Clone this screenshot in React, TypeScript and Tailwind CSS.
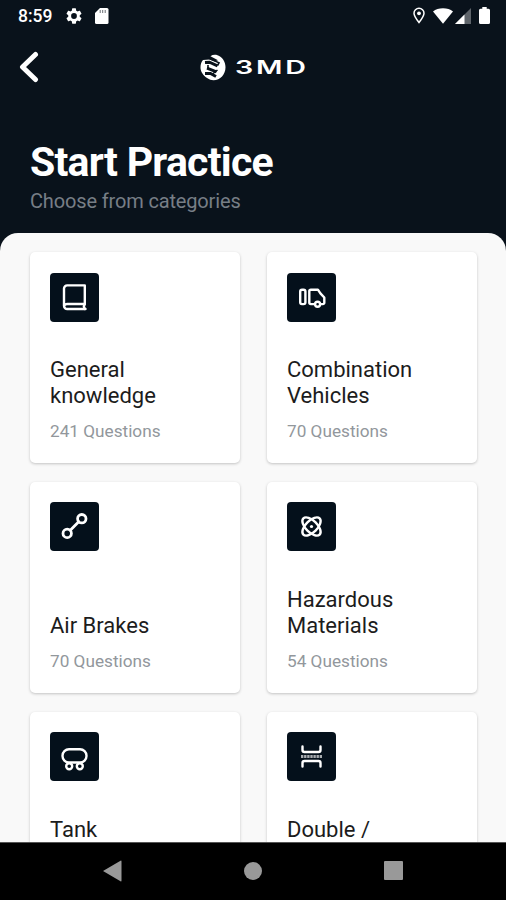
import type { ReactNode } from "react";

interface Category {
  title: string;
  questions?: number;
  icon: ReactNode;
}

interface IconProps {
  children: ReactNode;
}

function Icon({ children }: IconProps) {
  return (
    <svg
      width="49"
      height="49"
      viewBox="0 0 49 49"
      fill="none"
      stroke="currentColor"
      strokeWidth="2.4"
      strokeLinecap="round"
      strokeLinejoin="round"
    >
      {children}
    </svg>
  );
}

const categories: Category[] = [
  {
    title: "General\nknowledge",
    questions: 241,
    icon: (
      <Icon>
        <path d="M34.8 31V12.4H17.2a3.2 3.2 0 0 0-3.2 3.2v17.2a3.2 3.2 0 0 0 3.2 3.2h18.3" />
        <path d="M14.3 32.6c.4-1 1.4-1.6 2.8-1.6h17.7L33.8 33.5l1 2.5" />
      </Icon>
    ),
  },
  {
    title: "Combination\nVehicles",
    questions: 70,
    icon: (
      <Icon>
        <rect x="13.2" y="16.7" width="5.2" height="14.4" rx="1.8" />
        <path d="M27.6 31.1h-3.7a1.6 1.6 0 0 1-1.6-1.6V18.3a1.6 1.6 0 0 1 1.6-1.6h7l2.5 3.7 3.9 4.1v5.2a1.4 1.4 0 0 1-1.4 1.4h-2.3" />
        <circle cx="30.6" cy="31.3" r="2.5" />
      </Icon>
    ),
  },
  {
    title: "Air Brakes",
    questions: 70,
    icon: (
      <Icon>
        <circle cx="17.2" cy="31.4" r="4.2" strokeWidth="2.8" />
        <circle cx="31.8" cy="16.7" r="4.2" strokeWidth="2.8" />
        <path d="M20.3 28.3 28.7 19.8" strokeWidth="2.8" />
      </Icon>
    ),
  },
  {
    title: "Hazardous\nMaterials",
    questions: 54,
    icon: (
      <Icon>
        <ellipse cx="24.5" cy="24.5" rx="11.5" ry="5.8" transform="rotate(45 24.5 24.5)" />
        <ellipse cx="24.5" cy="24.5" rx="11.5" ry="5.8" transform="rotate(-45 24.5 24.5)" />
        <circle cx="24.5" cy="24.5" r="1.6" fill="currentColor" stroke="none" />
      </Icon>
    ),
  },
  {
    title: "Tank",
    icon: (
      <Icon>
        <rect x="12.5" y="17.2" width="24" height="13.3" rx="6.5" />
        <circle cx="19.2" cy="34.2" r="3" />
        <circle cx="29.8" cy="34.2" r="3" />
      </Icon>
    ),
  },
  {
    title: "Double /",
    icon: (
      <Icon>
        <path d="M15.5 14.5v3.5a2 2 0 0 0 2 2h14a2 2 0 0 0 2-2v-3.5M15.5 34.5V31a2 2 0 0 1 2-2h14a2 2 0 0 1 2 2v3.5" />
        <path d="M14 24.5h21" strokeWidth="3" strokeLinecap="butt" strokeDasharray="2.4 0.7" className="opacity-65" />
      </Icon>
    ),
  },
];

function StatusBar() {
  return (
    <div className="flex h-8 shrink-0 items-center justify-between pr-[16px] pl-[18px]">
      <div className="flex items-center">
        <span className="w-[48px] text-[17.5px] leading-8 font-medium">8:59</span>
        <svg width="16" height="16" viewBox="2 2 20 20" fill="currentColor">
          <path d="M19.14 12.94c.04-.3.06-.61.06-.94s-.02-.64-.07-.94l2.03-1.58a.49.49 0 0 0 .12-.61l-1.92-3.32a.49.49 0 0 0-.59-.22l-2.39.96c-.5-.38-1.03-.7-1.62-.94l-.36-2.54a.48.48 0 0 0-.48-.41h-3.84a.47.47 0 0 0-.47.41l-.36 2.54c-.59.24-1.13.57-1.62.94l-2.39-.96a.48.48 0 0 0-.59.22L2.74 8.87a.48.48 0 0 0 .12.61l2.03 1.58c-.05.3-.09.63-.09.94s.02.64.07.94l-2.03 1.58a.49.49 0 0 0-.12.61l1.92 3.32c.12.22.37.29.59.22l2.39-.96c.5.38 1.03.7 1.62.94l.36 2.54c.05.24.24.41.48.41h3.84c.24 0 .44-.17.47-.41l.36-2.54c.59-.24 1.13-.56 1.62-.94l2.39.96c.22.08.47 0 .59-.22l1.92-3.32a.47.47 0 0 0-.12-.61zM12 15.6a3.6 3.6 0 1 1 0-7.2 3.6 3.6 0 0 1 0 7.2" />
        </svg>
        <svg className="ml-[13px]" width="14" height="16" viewBox="0 0 14 16" fill="currentColor">
          <path d="M5 0h7a1.5 1.5 0 0 1 1.5 1.5v13a1.5 1.5 0 0 1-1.5 1.5H1.5A1.5 1.5 0 0 1 0 14.5V5z" />
          <path d="M5.2 2v3M7.7 2v3M10.2 2v3" stroke="#09121b" strokeWidth="1" opacity=".6" />
        </svg>
      </div>
      <div className="-mt-px flex items-center">
        <svg width="14" height="17" viewBox="0 0 14 17" fill="none" stroke="currentColor" strokeWidth="1.5">
          <path d="M7 15.5C4.5 12.4 2 9.3 2 6.3a5 5 0 0 1 10 0c0 3-2.5 6.1-5 9.2Z" />
          <circle cx="7" cy="6.3" r="1.9" fill="currentColor" stroke="none" />
        </svg>
        <svg className="ml-[7px]" width="20" height="16" viewBox="0 0 20 16" fill="currentColor">
          <path d="M0 3.5C2.6 1.5 6 .3 10 .3s7.4 1.2 10 3.2L10 15.8z" />
        </svg>
        <svg className="ml-[2px]" width="16" height="16" viewBox="0 0 16 16" fill="currentColor">
          <path d="M0 16 16 0v16z" opacity=".35" />
          <path d="M0 16 9.5 6.5V16z" />
        </svg>
        <svg className="ml-[8px]" width="11" height="17" viewBox="0 0 11 17" fill="currentColor">
          <path d="M3.3 0h4.4v1.8h1.8A1.5 1.5 0 0 1 11 3.3v12.2a1.5 1.5 0 0 1-1.5 1.5h-8A1.5 1.5 0 0 1 0 15.5V3.3a1.5 1.5 0 0 1 1.5-1.5h1.8z" />
        </svg>
      </div>
    </div>
  );
}

function Logo() {
  return (
    <div className="flex items-center">
      <svg width="26" height="27" viewBox="0 0 26 27">
        <path
          fill="currentColor"
          d="M10.5 2.2C12.5.8 15 .5 17.5 1.3c4.8 1.7 8 6.4 8 12 0 7.2-5.2 13-12 13-2.3 0-4.3-.8-6-2C3 21.5.5 17.5.5 13.5c0-3 .8-5.7 2.5-7.5l6.5-.4 5 2L18 6.3z"
        />
        <path
          fill="none"
          stroke="#09121b"
          strokeWidth="3"
          d="M5 8.5 9.5 8.2l8 3.6M7 14.2l9.5 3.6M5 19.500l5.500 0 5.500 3"
        />
        <path
          fill="none"
          stroke="#09121b"
          strokeWidth="1.6"
          d="M9 4.3 19 8.8 17.5 11.5M8 11v4M17.500 16l-5 4"
        />
      </svg>
      <div className="ml-[9px] w-[72px] pt-[2px]">
        <span className="inline-block origin-left scale-x-[1.55] font-['Inter',sans-serif] text-[18.5px] leading-6 font-semibold tracking-[1.8px]">
          3MD
        </span>
      </div>
    </div>
  );
}

function CategoryCard({ title, questions, icon }: Category) {
  return (
    <div className="h-[210.8px] rounded-[5px] bg-white px-5 pt-[20.5px] shadow-[0_1px_3px_rgba(0,0,0,0.22)]">
      <div className="h-[49px] w-[49px] rounded-[4px] bg-[#04101b] text-white">{icon}</div>
      <div className="mt-[35.9px] text-[22px] leading-[26px] text-[#1c1c1c]">
        {questions ? (
          <div className="flex h-[52px] items-end whitespace-pre-line">{title}</div>
        ) : (
          title
        )}
      </div>
      {questions && (
        <div className="mt-[12.1px] text-[17.2px] leading-5 text-[#92979c]">
          {questions} Questions
        </div>
      )}
    </div>
  );
}

function NavigationBar() {
  return (
    <div className="flex h-[58px] shrink-0 items-center justify-between border-t border-[#555] bg-black px-[103px] pb-[2px] text-[#999]">
      <svg width="19" height="22" viewBox="0 0 19 22" fill="currentColor">
        <path d="M0 11 17.5.7Q18.5 0 18.5 1.5v19q0 1.5-1 .8z" />
      </svg>
      <div className="h-[18px] w-[18px] rounded-full bg-[#999]" />
      <div className="h-[19px] w-[19px] rounded-[1px] bg-[#999]" />
    </div>
  );
}

export default function App() {
  return (
    <div className="flex h-[900px] w-[506px] flex-col overflow-hidden bg-[#09121b] font-['Roboto',sans-serif] text-white">
      <StatusBar />
      <div className="grid h-[70px] shrink-0 grid-cols-3 items-center">
        <svg className="ml-[19px]" width="20" height="32" viewBox="0 0 20 32" fill="none">
          <path d="M16.5 3.5 3.5 16l13 12.5" stroke="currentColor" strokeWidth="5" strokeLinecap="round" strokeLinejoin="round" />
        </svg>
        <div className="flex justify-center pl-[2px]">
          <Logo />
        </div>
      </div>
      <div className="h-[131px] shrink-0 px-[30px] pt-[36px]">
        <h1 className="text-[41px] leading-[48px] font-bold tracking-[-0.75px]">Start Practice</h1>
        <p className="mt-[3px] text-[20px] leading-6 tracking-[-0.15px] text-[#777e86]">Choose from categories</p>
      </div>
      <div className="min-h-0 flex-1 overflow-hidden rounded-t-[18px] bg-[#f9f9f9] px-[30px] pt-[19px]">
        <div className="grid grid-cols-[210px_210px] gap-x-[27px] gap-y-[19px]">
          {categories.map((category) => (
            <CategoryCard key={category.title} {...category} />
          ))}
        </div>
      </div>
      <NavigationBar />
    </div>
  );
}
